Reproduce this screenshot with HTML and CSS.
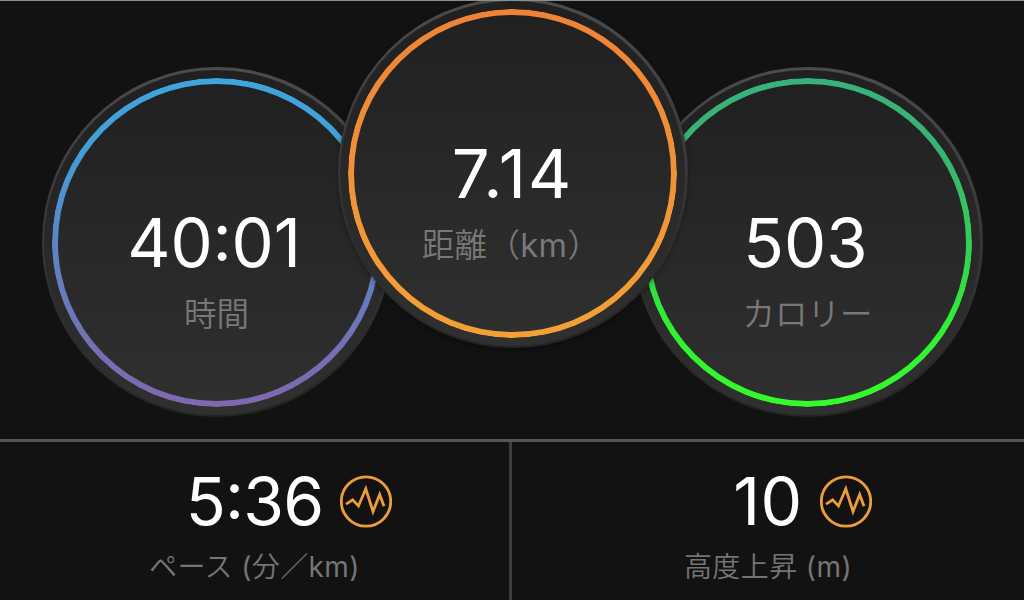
FILE: index.html
```html
<!DOCTYPE html>
<html lang="ja">
<head>
<meta charset="utf-8">
<title>ワークアウト</title>
<link rel="stylesheet" href="styles.css">
</head>
<body>
<main class="screen">
  <section class="dials">
    <div class="dial time">
      <div class="face"><div class="value v-time">40<span class="colon">:</span>01</div><div class="label">時間</div></div>
    </div>
    <div class="dial distance">
      <div class="face"><div class="value v-distance">7.14</div><div class="label">距離（<span class="unit">km</span>）</div></div>
    </div>
    <div class="dial calories">
      <div class="face"><div class="value v-calories">503</div><div class="label">カロリー</div></div>
    </div>
  </section>
  <section class="stats">
    <div class="stat">
      <div class="reading">
        <div class="value v-pace">5<span class="colon">:</span>36</div>
        <svg class="chart" viewBox="0 0 52 53"><circle cx="26" cy="26.5" r="24.7"/><path d="M6 29.2 12.7 24.8 18.5 31 25.8 13.8 33 36.5 39.7 19.5 44 31.2"/></svg>
      </div>
      <div class="caption">ペース <span class="unit">(</span>分／<span class="unit">km)</span></div>
    </div>
    <div class="stat">
      <div class="reading">
        <div class="value v-climb">10</div>
        <svg class="chart" viewBox="0 0 52 53"><circle cx="26" cy="26.5" r="24.7"/><path d="M6 29.2 12.7 24.8 18.5 31 25.8 13.8 33 36.5 39.7 19.5 44 31.2"/></svg>
      </div>
      <div class="caption">高度上昇 <span class="unit">(m)</span></div>
    </div>
  </section>
</main>
</body>
</html>
```
FILE: styles.css
```css
* { box-sizing: border-box; }
body { margin: 0; background: #121212; }
.screen {
  width: 1024px;
  height: 600px;
  overflow: hidden;
  display: flex;
  flex-direction: column;
  border-top: 1px solid #8b908e;
  color: #fff;
  font-family: Inter, "Noto Sans CJK JP", sans-serif;
}
.dials {
  height: 438px;
  flex: none;
  display: flex;
  justify-content: center;
  align-items: flex-start;
}
.dial {
  width: 350px;
  height: 350px;
  flex: none;
  margin-top: 66px;
  padding: 2.5px;
  border-radius: 50%;
  background: linear-gradient(#4c4c4c, #363636 50%, #242424);
}
.time { margin-right: -54px; }
.calories { margin-left: -55px; }
.distance { margin-top: -3px; z-index: 1; box-shadow: 0 2px 5px rgba(0, 0, 0, .35); }
.face {
  height: 345px;
  border-radius: 50%;
  background: linear-gradient(#202020, #303030);
  display: flex;
  flex-direction: column;
  align-items: center;
  position: relative;
}
.face::before {
  content: "";
  position: absolute;
  inset: 8px;
  border-radius: 50%;
  padding: 6px;
  background: var(--ring);
  mask: linear-gradient(#000 0 0) content-box exclude, linear-gradient(#000 0 0);
}
.time .face { --ring: linear-gradient(#3ea5dc, #439fd8 20%, #5b85c4 50%, #7371b4 80%, #7f69b0); }
.distance .face { --ring: linear-gradient(#ee8336, #f3a136); }
.calories .face { --ring: linear-gradient(#38b27c, #39b275 20%, #32cc57 48%, #30f032 76%, #34fb2b); }
.value { font-size: 67px; line-height: 80px; white-space: nowrap; font-feature-settings: "calt" 0; }
.face .value { margin-top: 133.5px; }
.colon { position: relative; top: -6px; }
.v-time { letter-spacing: -.2px; padding-right: 5px; }
.v-distance { letter-spacing: 2px; }
.v-calories { padding-right: 4px; }
.label {
  margin-top: 7.5px;
  font-size: 32.5px;
  line-height: 48px;
  font-weight: 350;
  color: #787878;
  white-space: nowrap;
}
.unit { font-weight: 400; }
.distance .label { padding-right: 3px; letter-spacing: .4px; }
.stats {
  flex: 1;
  display: grid;
  grid-template-columns: 512px 512px;
  border-top: 3px solid #555;
}
.stat { padding-top: 19px; }
.stat:first-child { border-right: 3px solid #3e3e3e; }
.reading {
  height: 80px;
  display: grid;
  grid-template-columns: 1fr auto 1fr;
  align-items: center;
}
.reading .value { grid-column: 2; font-size: 66px; }
.reading .v-pace { letter-spacing: -.8px; }
.reading .v-climb { letter-spacing: .5px; }
.chart {
  width: 52px;
  height: 53px;
  margin-left: 17px;
  fill: none;
  stroke: #ed9c3b;
  stroke-width: 2.8;
}
.caption {
  margin-top: 5px;
  text-align: center;
  font-size: 28px;
  line-height: 42px;
  font-weight: 350;
  letter-spacing: .4px;
  color: #757575;
}
```
